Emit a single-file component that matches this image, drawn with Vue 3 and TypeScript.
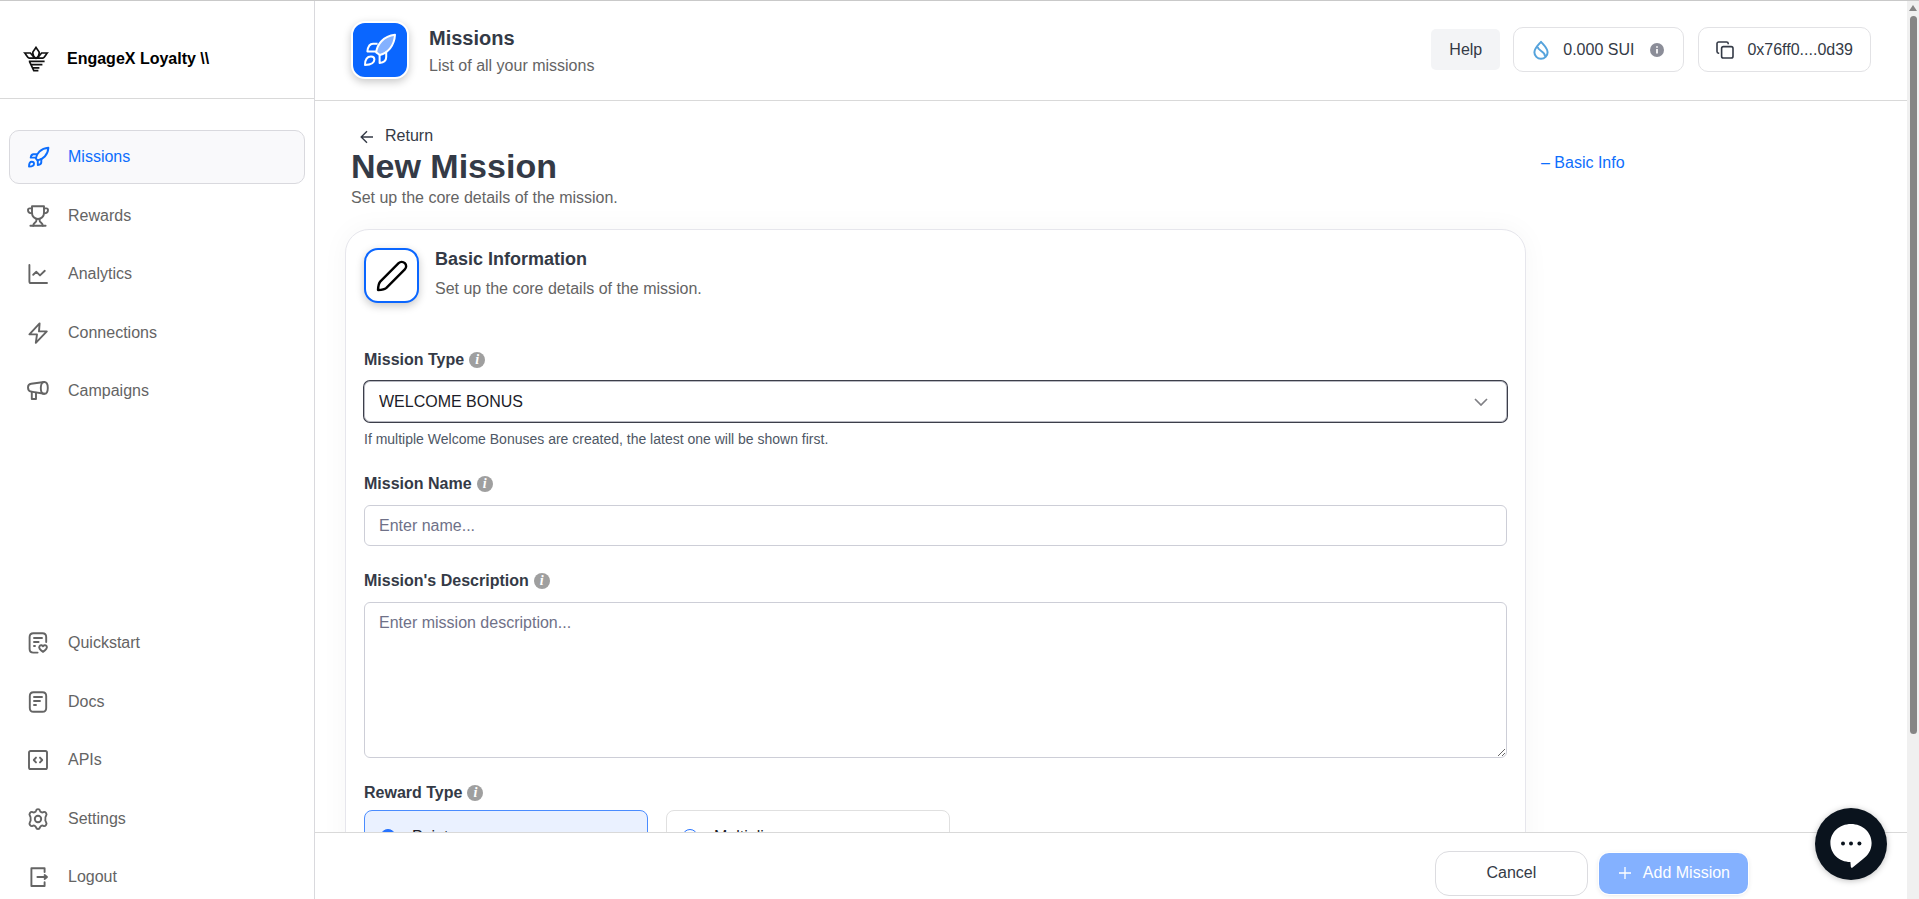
<script setup lang="ts">
import { ref } from 'vue'

interface NavItem {
  label: string
  icon: string
  active?: boolean
}

const primaryNav: NavItem[] = [
  { label: 'Missions', icon: 'rocket', active: true },
  { label: 'Rewards', icon: 'trophy' },
  { label: 'Analytics', icon: 'chart' },
  { label: 'Connections', icon: 'bolt' },
  { label: 'Campaigns', icon: 'megaphone' },
]

const secondaryNav: NavItem[] = [
  { label: 'Quickstart', icon: 'quickstart' },
  { label: 'Docs', icon: 'docs' },
  { label: 'APIs', icon: 'code' },
  { label: 'Settings', icon: 'gear' },
  { label: 'Logout', icon: 'logout' },
]

const icons: Record<string, string[]> = {
  rocket: [
    'M9.8 13.4C10.6 8.6 14.6 3.4 22.4 2.8C21.8 10 17 14.6 11.4 15.4Z',
    'M10.6 9.2H7.4C5.8 9.2 5 10.6 4.7 12.6H9',
    'M15.3 14V17.2C15.3 18.8 13.6 19.8 11.8 20.1V15.6',
    'M3 21.6C3 18.8 4 16.8 5.8 16.8C7.2 16.8 8 17.6 8 18.8C8 20.8 5.8 21.6 3 21.6Z',
  ],
  trophy: [
    'M6 2.2H18V9A6 6 0 0 1 6 9Z',
    'M6 4.4H3.6C2.4 4.4 2 5 2 6C2 8.2 3.4 9.4 6.2 9.4',
    'M18 4.4H20.4C21.6 4.4 22 5 22 6C22 8.2 20.6 9.4 17.8 9.4',
    'M10.4 15V16.4C10.4 18.6 7.4 18.6 7.2 21.8M13.6 15V16.4C13.6 18.6 16.6 18.6 16.8 21.8',
    'M4.4 21.8H19.6',
  ],
  chart: ['M3.4 3V19.4A1.6 1.6 0 0 0 5 21H21', 'M7.2 12.8L10.4 9.8L14 13.4L18.8 8.8'],
  bolt: ['M13.6 2.4L3.4 13.4H11L9.8 21.8L20.8 10.4H13Z'],
  megaphone: [
    'M18.2 3L5.2 4.8C3 5.1 2 6.4 2 8.5C2 10.7 3 12.2 5.2 12.6L18.2 14.8',
    'M18.2 3C20.4 3 21.8 5.4 21.8 8.9C21.8 12.4 20.4 14.8 18.2 14.8C16 14.8 14.8 12.4 14.8 8.9C14.8 5.4 16 3 18.2 3Z',
    'M5.8 12.8V20H10V13.6',
  ],
  quickstart: [
    'M20.2 11V6C20.2 3.6 19 2.2 16.4 2.2H7.4C4.8 2.2 3.6 3.6 3.6 6V18C3.6 20.4 4.8 21.6 7.4 21.6H11.6',
    'M8 7H16M8 11H12.6M8 15H9',
    'M17 20.8C13.8 19 12.4 16.6 13.6 15C14.8 13.6 16.4 14.2 17 15.2C17.6 14.2 19.4 13.6 20.6 15C21.6 16.6 20.2 19 17 20.8Z',
  ],
  docs: [
    'M7.6 2.2H16.4C19 2.2 20.2 3.6 20.2 6V18C20.2 20.4 19 21.8 16.4 21.8H7.6C5 21.8 3.8 20.4 3.8 18V6C3.8 3.6 5 2.2 7.6 2.2Z',
    'M8 7H16M8 11H14M8 15H10',
  ],
  code: [
    'M4.6 3H19.4A1.6 1.6 0 0 1 21 4.6V19.4A1.6 1.6 0 0 1 19.4 21H4.6A1.6 1.6 0 0 1 3 19.4V4.6A1.6 1.6 0 0 1 4.6 3Z',
    'M10 9.6L7.8 12L10 14.4M14 9.6L16.2 12L14 14.4',
  ],
  gear: [
    'M10.1 3.5C10.5 1.6 13.5 1.6 13.9 3.5C14.3 5.1 15.9 5.9 17.4 5.1C19.3 4.2 21.3 6.9 20.2 8.6C19.2 10.2 18.9 10.9 19.4 12C18.9 13.1 19.2 13.8 20.2 15.4C21.3 17.1 19.3 19.8 17.4 18.9C15.9 18.1 14.3 18.9 13.9 20.5C13.5 22.4 10.5 22.4 10.1 20.5C9.7 18.9 8.1 18.1 6.6 18.9C4.7 19.8 2.7 17.1 3.8 15.4C4.8 13.8 5.1 13.1 4.6 12C5.1 10.9 4.8 10.2 3.8 8.6C2.7 6.9 4.7 4.2 6.6 5.1C8.1 5.9 9.7 5.1 10.1 3.5Z',
    'M12 8.8A3.2 3.2 0 1 1 12 15.2A3.2 3.2 0 1 1 12 8.8Z',
  ],
  logout: ['M18.6 7V3.2H5.4V21H18.6V17.2', 'M11.4 12H20.8M18.6 10L21 12L18.6 14'],
}

const missionType = ref('WELCOME BONUS')
const missionName = ref('')
const description = ref('')
const rewardType = ref('Points')
const rewardTypes = ['Points', 'Multiplier']
</script>

<template>
  <div class="shell">
    <aside class="sidebar">
      <div class="brand">
        <svg class="brand-logo" viewBox="0 0 26 26" fill="none" stroke="#111" stroke-width="1.7">
          <path d="M13 1.4L16 5.8C16.6 8.2 15.4 10.6 13 12.4C10.6 10.6 9.4 8.2 10 5.8Z" />
          <path d="M1.8 7H7.4L11.8 12.2H6.2C4.2 11.6 3.4 9 1.8 7Z" />
          <path d="M24.2 7H18.6L14.2 12.2H19.8C21.8 11.6 22.6 9 24.2 7Z" />
          <path d="M5.8 15.4H21.6M8.2 18.6H19.4M9.4 21.8H16.4M6.4 15.4L10.8 24.6H15.4" />
        </svg>
        <span>EngageX Loyalty \\</span>
      </div>
      <nav class="nav" aria-label="Main">
        <a v-for="item in primaryNav" :key="item.label" href="#" class="nav-item" :class="{ active: item.active }">
          <svg class="nav-icon" viewBox="0 0 24 24"><path v-for="d in icons[item.icon]" :key="d" :d="d" /></svg>
          <span>{{ item.label }}</span>
        </a>
      </nav>
      <nav class="nav nav-bottom" aria-label="Resources">
        <a v-for="item in secondaryNav" :key="item.label" href="#" class="nav-item">
          <svg class="nav-icon" viewBox="0 0 24 24"><path v-for="d in icons[item.icon]" :key="d" :d="d" /></svg>
          <span>{{ item.label }}</span>
        </a>
      </nav>
    </aside>

    <div class="main">
      <header class="topbar">
        <div class="tile tile-blue">
          <svg viewBox="0 0 34 34" fill="none" stroke="#fff" stroke-width="2" stroke-linejoin="round">
            <path d="M13.2 19.4C14 12 20 3 32 1.8C31.4 13 24.6 20 16.8 22Z" fill="#84b1ff" />
            <path d="M14.6 10.8H10C6.8 10.8 5 13.4 4.4 18.4H13" />
            <path d="M23.2 18.4V24C23.2 27.4 20.4 29.6 16.6 30V22" />
            <path d="M2 32C2 27 4 23.4 8 23.4C10.4 23.4 11.4 24.6 11.4 26.4C11.4 30 7.4 31.6 2 32Z" />
          </svg>
        </div>
        <div class="topbar-text">
          <h2>Missions</h2>
          <p>List of all your missions</p>
        </div>
        <div class="topbar-actions">
          <button type="button" class="help">Help</button>
          <div class="pill balance">
            <svg class="drop" viewBox="0 0 18 20" fill="none" stroke="#55a3dc" stroke-width="2" stroke-linejoin="round">
              <path d="M9 1.8C11.8 5 15.6 8.4 15.6 12.2A6.6 6.6 0 0 1 2.4 12.2C2.4 8.4 6.2 5 9 1.8Z" />
              <path d="M5.6 6.8C5.8 11 12.8 10.6 13.2 16.6" />
            </svg>
            <span>0.000 SUI</span>
            <svg class="info-small" viewBox="0 0 14 14">
              <circle cx="7" cy="7" r="7" fill="#8b8d98" />
              <path d="M7 6V10.6M7 3.2V4.8" stroke="#fff" stroke-width="1.7" />
            </svg>
          </div>
          <button type="button" class="pill address">
            <svg class="copy" viewBox="0 0 18 18" fill="none" stroke="#343a46" stroke-width="1.6">
              <rect x="5.6" y="5.6" width="11.4" height="11.4" rx="1.8" />
              <path d="M3.2 12.2H2.6A1.6 1.6 0 0 1 1 10.6V2.6A1.6 1.6 0 0 1 2.6 1H10.6A1.6 1.6 0 0 1 12.2 2.6V3.2" />
            </svg>
            <span>0x76ff0....0d39</span>
          </button>
        </div>
      </header>

      <main class="content">
        <div class="column">
          <div class="page-head">
            <a href="#" class="return">
              <svg viewBox="0 0 14 14" fill="none" stroke="#343a46" stroke-width="1.4">
                <path d="M13 7H1.4M7 1.2L1.2 7L7 12.8" />
              </svg>
              <span>Return</span>
            </a>
            <h1>New Mission</h1>
            <p>Set up the core details of the mission.</p>
          </div>

          <form class="card" @submit.prevent>
            <div class="card-head">
              <div class="tile tile-outline">
                <svg viewBox="0 0 32 32" fill="none" stroke="#000" stroke-width="2.4" stroke-linejoin="round">
                  <path d="M2 30C2.2 26.4 2.4 23.6 4.2 21.6L22.6 3.2C24.4 1.4 27 1.4 28.8 3.2C30.6 5 30.6 7.6 28.8 9.4L10.4 27.8C8.4 29.6 5.6 29.8 2 30Z" />
                </svg>
              </div>
              <div class="card-title">
                <h3>Basic Information</h3>
                <p>Set up the core details of the mission.</p>
              </div>
            </div>

            <div class="field">
              <div class="label-row">
                <label for="mission-type">Mission Type</label>
                <span class="info" aria-hidden="true">i</span>
              </div>
              <div class="select-wrap">
                <select id="mission-type" v-model="missionType" class="control">
                  <option>WELCOME BONUS</option>
                </select>
                <svg class="chevron" viewBox="0 0 14 8" fill="none" stroke="#808085" stroke-width="1.7">
                  <path d="M1 1L7 7L13 1" />
                </svg>
              </div>
              <p class="hint">If multiple Welcome Bonuses are created, the latest one will be shown first.</p>
            </div>

            <div class="field">
              <div class="label-row">
                <label for="mission-name">Mission Name</label>
                <span class="info" aria-hidden="true">i</span>
              </div>
              <input id="mission-name" v-model="missionName" class="control" type="text" placeholder="Enter name..." />
            </div>

            <div class="field">
              <div class="label-row">
                <label for="mission-description">Mission's Description</label>
                <span class="info" aria-hidden="true">i</span>
              </div>
              <textarea id="mission-description" v-model="description" class="control" placeholder="Enter mission description..."></textarea>
            </div>

            <div class="field rewards" role="radiogroup" aria-labelledby="reward-type">
              <div class="label-row">
                <span id="reward-type" class="label">Reward Type</span>
                <span class="info" aria-hidden="true">i</span>
              </div>
              <div class="reward-options">
                <label v-for="kind in rewardTypes" :key="kind" class="reward" :class="{ chosen: rewardType === kind }">
                  <input v-model="rewardType" type="radio" name="reward" :value="kind" />
                  <span>{{ kind }}</span>
                </label>
              </div>
            </div>
          </form>
        </div>
        <nav class="toc" aria-label="Sections">
          <a href="#">– Basic Info</a>
        </nav>
      </main>

      <footer class="footer">
        <button type="button" class="cancel">Cancel</button>
        <button type="button" class="add">
          <svg viewBox="0 0 12 12" stroke="#fff" stroke-width="1.3"><path d="M6 0V12M0 6H12" /></svg>
          <span>Add Mission</span>
        </button>
      </footer>
    </div>

    <div class="scrollbar" aria-hidden="true">
      <div class="arrow"></div>
      <div class="thumb"></div>
    </div>

    <button type="button" class="chat" aria-label="Open chat">
      <svg viewBox="0 0 42 44">
        <path d="M21 0C32.6 0 41.6 8.4 41.6 19C41.6 26 38 31.6 33 35L22.6 43.6C21.6 44.2 20.8 43.6 20.8 42.6L20.4 38C9 38 .4 29.6 .4 19C.4 8.4 9.4 0 21 0Z" fill="#fff" />
        <circle cx="13" cy="19.4" r="2" fill="#0a131d" />
        <circle cx="21" cy="19.4" r="2" fill="#0a131d" />
        <circle cx="29.4" cy="19.4" r="2" fill="#0a131d" />
      </svg>
    </button>
  </div>
</template>

<style>
body {
  margin: 0;
  background: #fff;
}
</style>

<style scoped>
.shell {
  display: flex;
  height: 100vh;
  box-sizing: border-box;
  border-top: 1px solid #c9c9c9;
  overflow: hidden;
  font-family: "Liberation Sans", Arial, sans-serif;
  font-size: 16px;
  line-height: 24px;
  color: #343a46;
}

.shell * {
  box-sizing: border-box;
}

h1,
h2,
h3,
p {
  margin: 0;
}

a {
  color: inherit;
  text-decoration: none;
}

button,
input,
select,
textarea {
  font: inherit;
  color: inherit;
}

p {
  color: #646464;
}

.sidebar {
  flex: none;
  width: 315px;
  display: flex;
  flex-direction: column;
  border-right: 1px solid #d9d9dd;
  overflow: hidden;
}

.brand {
  flex: none;
  height: 98px;
  display: flex;
  align-items: center;
  gap: 18px;
  padding: 18px 23px 0;
  border-bottom: 1px solid #d9d9d9;
  font-weight: 700;
  color: #000;
}

.brand-logo {
  width: 26px;
  height: 26px;
}

.nav {
  flex: none;
  height: 288px;
  display: flex;
  flex-direction: column;
  justify-content: space-between;
  margin: 31px 9px 0;
}

.nav-bottom {
  margin-top: auto;
  margin-bottom: -5px;
}

.nav-item {
  height: 54px;
  display: flex;
  align-items: center;
  gap: 18px;
  padding: 0 16px;
  border: 1px solid transparent;
  border-radius: 10px;
  color: #646464;
}

.nav-item.active {
  background: #f9f9fb;
  border-color: #d9d9de;
  color: #0d6efd;
}

.nav-icon {
  width: 24px;
  height: 24px;
  fill: none;
  stroke: currentColor;
  stroke-width: 1.9;
  stroke-linecap: round;
  stroke-linejoin: round;
}

.main {
  flex: 1;
  min-width: 0;
  display: flex;
  flex-direction: column;
}

.topbar {
  flex: none;
  height: 100px;
  display: flex;
  align-items: center;
  padding: 0 36px 2px;
  border-bottom: 1px solid #d9d9d9;
}

.tile {
  flex: none;
  display: flex;
  align-items: center;
  justify-content: center;
  border-radius: 14px;
  box-shadow: 0 3px 8px rgba(0, 0, 0, 0.22);
}

.tile-blue {
  width: 58px;
  height: 58px;
  background: #0a66ff;
  border: 2px solid #fff;
}

.tile-blue svg {
  width: 34px;
  height: 34px;
}

.tile-outline {
  width: 55px;
  height: 55px;
  background: #fff;
  border: 2px solid #0a66ff;
}

.tile-outline svg {
  width: 32px;
  height: 32px;
}

.topbar-text {
  display: flex;
  flex-direction: column;
  gap: 2px;
  margin-left: 20px;
  padding-top: 2px;
}

.topbar-text h2 {
  font-size: 20px;
  line-height: 28px;
}

.topbar-actions {
  display: flex;
  align-items: center;
  margin-left: auto;
}

.help {
  height: 41px;
  padding: 0 18px;
  margin-right: 13px;
  border: 0;
  border-radius: 5px;
  background: #f3f4f6;
}

.pill {
  height: 45px;
  display: flex;
  align-items: center;
  border: 1px solid #e2e2e5;
  border-radius: 10px;
  background: #fff;
}

.balance {
  padding: 0 19px 0 18px;
  margin-right: 14px;
}

.drop {
  width: 18px;
  height: 20px;
  margin-right: 13px;
}

.info-small {
  width: 14px;
  height: 14px;
  margin-left: 16px;
}

.address {
  padding: 0 17px;
}

.copy {
  width: 18px;
  height: 18px;
  margin-right: 13px;
}

.content {
  flex: 1;
  min-height: 0;
  display: grid;
  grid-template-columns: minmax(0, 1fr) 366px;
  gap: 15px;
  align-items: start;
  padding: 24px 0 24px 30px;
  overflow-y: auto;
  scrollbar-width: none;
}

.page-head {
  padding-left: 6px;
  margin-bottom: 18px;
}

.return {
  display: flex;
  align-items: center;
  gap: 11px;
  padding-left: 9px;
  line-height: 22px;
}

.return svg {
  width: 14px;
  height: 14px;
  margin-top: 2px;
}

.page-head h1 {
  font-size: 34px;
  line-height: 38px;
}

.page-head p {
  line-height: 26px;
}

.card {
  padding: 18px;
  border: 1px solid #e6e6ec;
  border-radius: 24px;
  background: #fff;
  box-shadow: 0 0 28px rgba(0, 0, 0, 0.04);
}

.card-head {
  display: flex;
  gap: 16px;
  margin-bottom: 45px;
}

.card-title {
  display: flex;
  flex-direction: column;
  gap: 7px;
}

.card-title h3 {
  font-size: 18px;
  line-height: 22px;
}

.field {
  display: flex;
  flex-direction: column;
  margin-bottom: 23px;
}

.label-row {
  display: flex;
  align-items: center;
  gap: 5px;
  margin-bottom: 9px;
}

.label-row label,
.label {
  font-weight: 700;
}

.info {
  width: 16px;
  height: 16px;
  border-radius: 50%;
  background: #9f9f9f;
  color: #fff;
  font-family: "Liberation Serif", "Times New Roman", serif;
  font-size: 14px;
  line-height: 16px;
  font-style: italic;
  font-weight: 700;
  text-align: center;
}

.control {
  display: block;
  width: 100%;
  height: 41px;
  margin: 0;
  padding: 0 14px;
  border: 1px solid #cdced7;
  border-radius: 6px;
  background: #fff;
  outline: none;
}

.control::placeholder {
  color: #6f7188;
  opacity: 1;
}

textarea.control {
  height: 156px;
  padding: 8px 14px;
  resize: vertical;
}

.select-wrap {
  position: relative;
}

select.control {
  appearance: none;
  border-color: #b9bac2;
  color: #1c1c28;
  box-shadow: 0 0 0 1px #3c3e4a;
}

.chevron {
  position: absolute;
  right: 19px;
  top: 17px;
  width: 14px;
  height: 8px;
  pointer-events: none;
}

.hint {
  margin-top: 7px;
  font-size: 14px;
  line-height: 20px;
  color: #4e5765;
}

.rewards .label-row {
  margin-bottom: 5px;
}

.reward-options {
  display: grid;
  grid-template-columns: repeat(auto-fill, 284px);
  gap: 18px;
}

.reward {
  height: 54px;
  display: flex;
  align-items: center;
  gap: 16px;
  padding: 0 15px;
  border: 1px solid #e0e0e0;
  border-radius: 8px;
  color: #1c1c28;
}

.reward.chosen {
  background: #eaf1ff;
  border-color: #4a8cff;
}

.reward input {
  appearance: none;
  width: 16px;
  height: 16px;
  margin: 0;
  border: 1px solid #2673ff;
  border-radius: 50%;
  background: #fff;
}

.reward input:checked {
  background: #2673ff;
}

.toc {
  padding-top: 26px;
}

.toc a {
  color: #0d6efd;
}

.footer {
  flex: none;
  height: 67px;
  display: flex;
  align-items: center;
  justify-content: flex-end;
  gap: 11px;
  padding: 15px 159px 0 0;
  border-top: 1px solid #d9d9d9;
  background: #fff;
}

.cancel {
  width: 153px;
  height: 45px;
  padding-bottom: 3px;
  border: 1px solid #dcdce0;
  border-radius: 14px;
  background: #fff;
}

.add {
  height: 41px;
  display: flex;
  align-items: center;
  gap: 12px;
  padding: 0 18px 2px 20px;
  border: 0;
  border-radius: 10px;
  background: #84b1ff;
  color: #fff;
  box-shadow: 0 0 0 1px #fff, 0 1px 5px rgba(0, 0, 0, 0.12);
}

.add svg {
  width: 12px;
  height: 12px;
}

.scrollbar {
  flex: none;
  width: 12px;
  display: flex;
  flex-direction: column;
  align-items: center;
  background: #f0f0f0;
}

.arrow {
  flex: none;
  margin: 4px 0 5px;
  border: 4px solid transparent;
  border-top: 0;
  border-bottom: 6px solid #858585;
}

.thumb {
  width: 7px;
  height: 80%;
  border-radius: 4px;
  background: #858585;
}

.chat {
  position: fixed;
  right: 32px;
  bottom: 19px;
  width: 72px;
  height: 72px;
  display: flex;
  align-items: center;
  justify-content: center;
  padding: 4px 0 0;
  border: 0;
  border-radius: 50%;
  background: #0a131d;
  box-shadow: 0 1px 6px rgba(0, 0, 0, 0.25);
}

.chat svg {
  width: 42px;
  height: 44px;
}
</style>
